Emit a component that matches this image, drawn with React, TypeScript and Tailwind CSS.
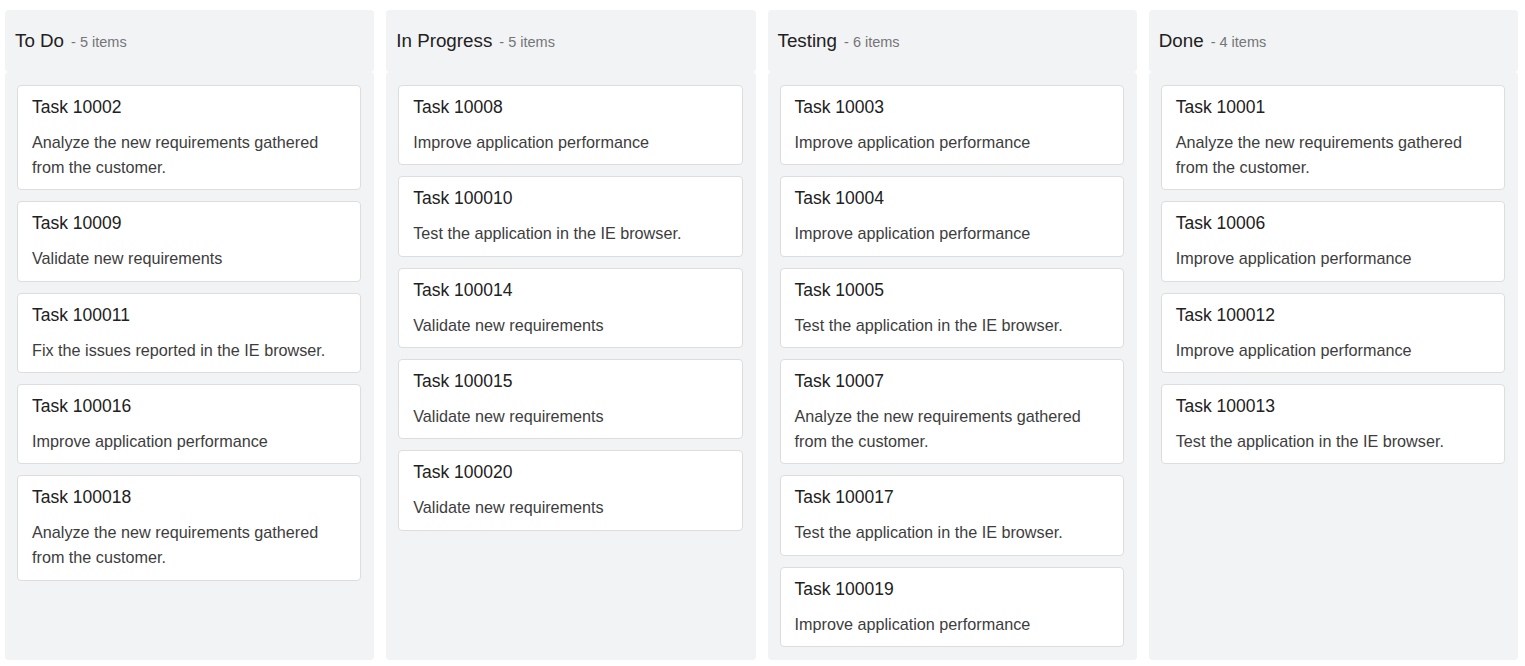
import React from 'react';

type Task = { id: string; summary: string };

type Column = { title: string; tasks: Task[] };

const columns: Column[] = [
  {
    title: 'To Do',
    tasks: [
      { id: 'Task 10002', summary: 'Analyze the new requirements gathered from the customer.' },
      { id: 'Task 10009', summary: 'Validate new requirements' },
      { id: 'Task 100011', summary: 'Fix the issues reported in the IE browser.' },
      { id: 'Task 100016', summary: 'Improve application performance' },
      { id: 'Task 100018', summary: 'Analyze the new requirements gathered from the customer.' },
    ],
  },
  {
    title: 'In Progress',
    tasks: [
      { id: 'Task 10008', summary: 'Improve application performance' },
      { id: 'Task 100010', summary: 'Test the application in the IE browser.' },
      { id: 'Task 100014', summary: 'Validate new requirements' },
      { id: 'Task 100015', summary: 'Validate new requirements' },
      { id: 'Task 100020', summary: 'Validate new requirements' },
    ],
  },
  {
    title: 'Testing',
    tasks: [
      { id: 'Task 10003', summary: 'Improve application performance' },
      { id: 'Task 10004', summary: 'Improve application performance' },
      { id: 'Task 10005', summary: 'Test the application in the IE browser.' },
      { id: 'Task 10007', summary: 'Analyze the new requirements gathered from the customer.' },
      { id: 'Task 100017', summary: 'Test the application in the IE browser.' },
      { id: 'Task 100019', summary: 'Improve application performance' },
    ],
  },
  {
    title: 'Done',
    tasks: [
      { id: 'Task 10001', summary: 'Analyze the new requirements gathered from the customer.' },
      { id: 'Task 10006', summary: 'Improve application performance' },
      { id: 'Task 100012', summary: 'Improve application performance' },
      { id: 'Task 100013', summary: 'Test the application in the IE browser.' },
    ],
  },
];

function Card({ task }: { task: Task }) {
  return (
    <div className="rounded-[4px] border border-[#dddddd] bg-white pl-[14px] pr-[14px] pt-[9px] pb-[9.33px]">
      <div className="text-[17.5px] leading-[24px] text-[#212121]">{task.id}</div>
      <div className="mt-[11px] text-[16.2px] leading-[25px] text-[#3d3d3d]">{task.summary}</div>
    </div>
  );
}

export default function App() {
  return (
    <div
      className="flex h-[666px] gap-[12px] bg-white pl-[5px] pr-[7px] pt-[10px] pb-[6px]"
      style={{ fontFamily: '"Liberation Sans", Arial, sans-serif' }}
    >
      {columns.map((col) => (
        <div key={col.title} className="flex flex-1 flex-col">
          <div className="flex h-[62px] items-center rounded-[4px] bg-[#f2f3f5] px-[10px]">
            <div className="leading-[24px]">
              <span className="text-[18.8px] text-[#212121]">{col.title}</span>
              <span className="ml-[7px] text-[14.5px] text-[#757575]">- {col.tasks.length} items</span>
            </div>
          </div>
          <div className="flex flex-1 flex-col gap-[11px] rounded-[4px] bg-[#f2f3f5] pl-[12px] pr-[13px] pt-[13px]">
            {col.tasks.map((t) => (
              <Card key={t.id} task={t} />
            ))}
          </div>
        </div>
      ))}
    </div>
  );
}
